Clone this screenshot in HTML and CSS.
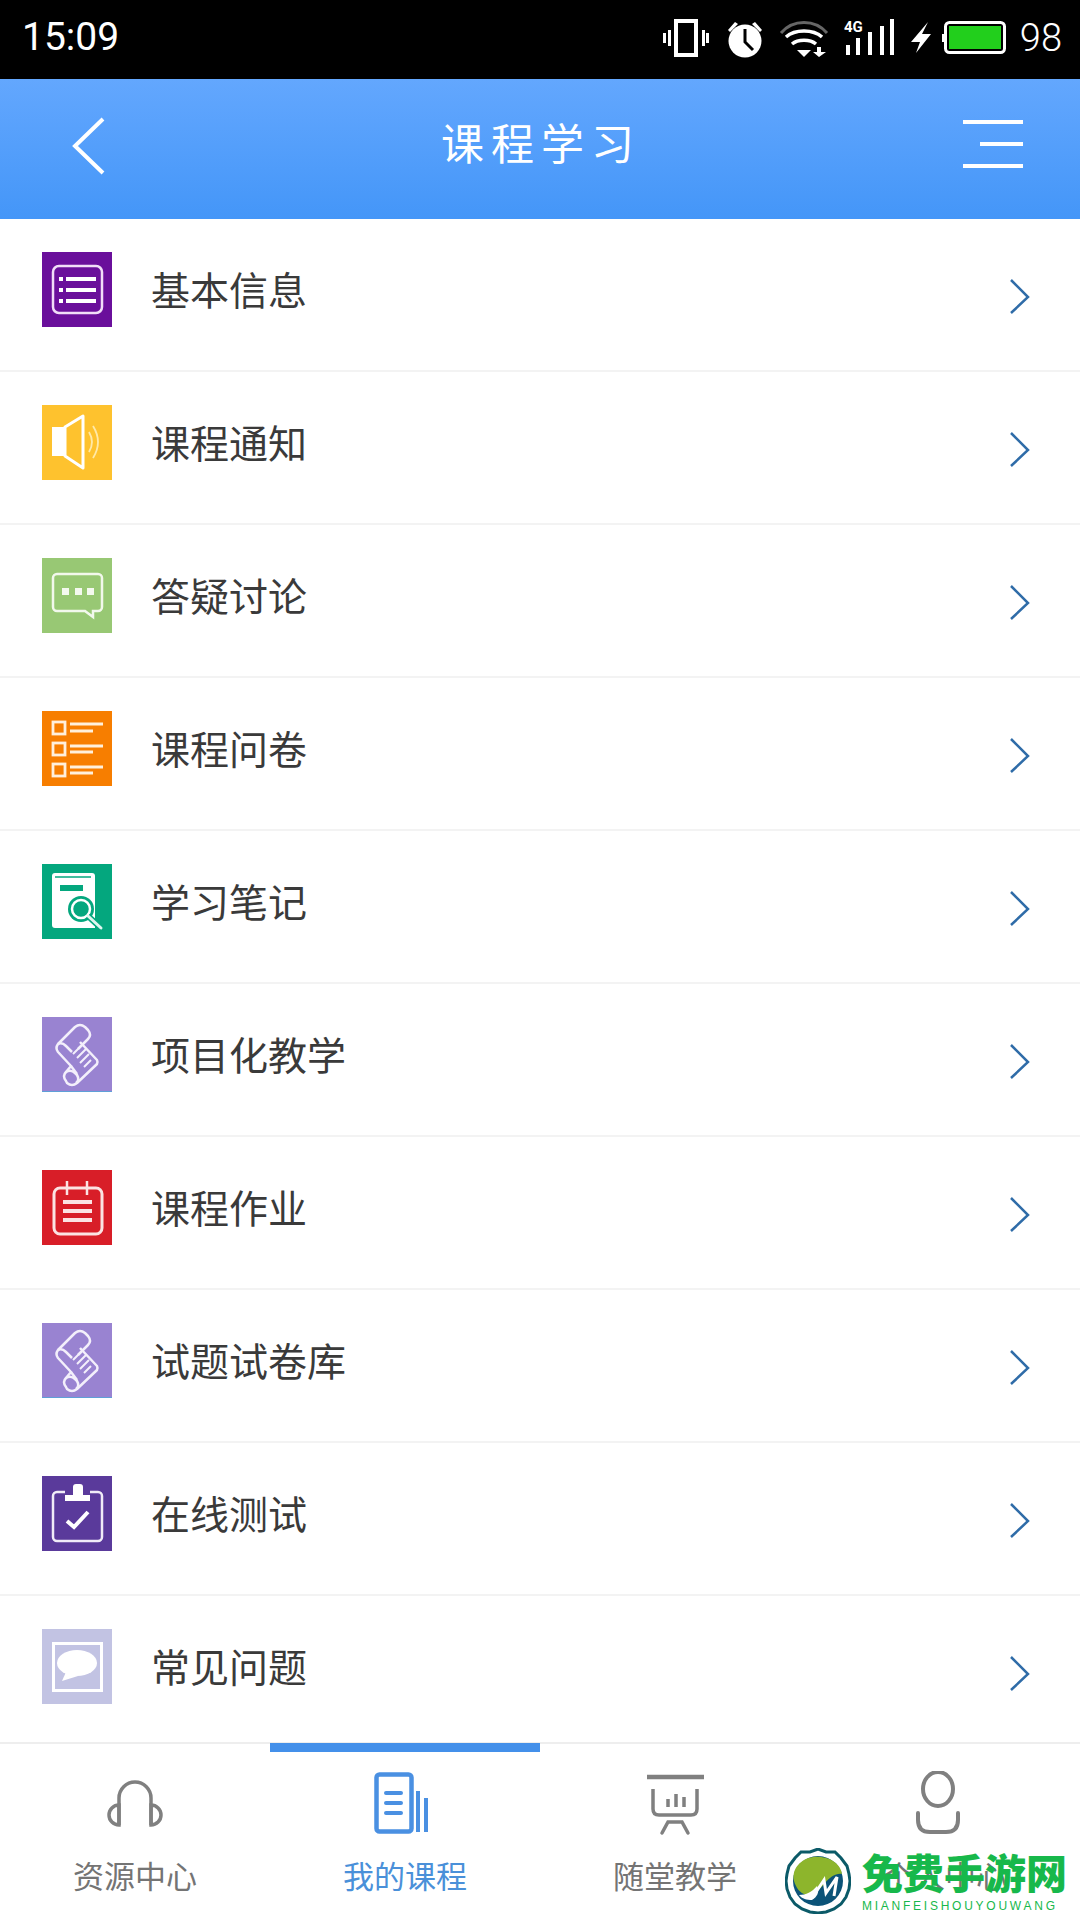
FILE: index.html
```html
<!DOCTYPE html>
<html lang="zh-CN">
<head>
<meta charset="utf-8">
<title>课程学习</title>
<link rel="stylesheet" href="styles.css">
</head>
<body>
<div class="app">
  <div class="status">
    <span class="time">15:09</span>
    <svg class="status-icons" viewBox="664 0 343 79" width="343" height="79">
      <g fill="#fff">
        <path fill-rule="evenodd" d="M675 19h24v38h-24zM679 23v30h16V23z"/>
        <rect x="664" y="33" width="3" height="10"/><rect x="669" y="30" width="3" height="16"/>
        <rect x="703" y="30" width="3" height="16"/><rect x="707" y="33" width="3" height="10"/>
        <circle cx="746" cy="41" r="16.500"/>
        <path d="M729 30l7-8 3 2-8 8zM763 30l-7-8-3 2 8 8z"/>
        <path d="M782 33c12-14 34-14 46 0" fill="none" stroke="#666" stroke-width="3"/>
        <path d="M787 37c9-8 27-8 36 0M793 44c6-5 18-5 24 0" fill="none" stroke="#fff" stroke-width="3.500"/>
        <path d="M798 50h14l-7 7z"/>
        <path d="M818 47h4v5h5l-7 5-6-5h4z"/>
        <text class="net" x="845" y="32">4G</text>
        <rect x="847" y="45" width="4" height="10"/><rect x="857" y="38" width="4" height="17"/><rect x="869" y="32" width="4" height="23"/><rect x="881" y="26" width="4" height="29"/><rect x="891" y="19" width="4" height="36"/>
        <path d="M929 22l-17 20h9l-4 11 15-19h-9z"/>
        <rect x="943" y="34" width="3" height="8"/>
      </g>
      <path d="M746 29v13l8 8" fill="none" stroke="#000" stroke-width="3"/>
      <rect x="946.500" y="22.500" width="59" height="30" rx="4" fill="#000" stroke="#fff" stroke-width="3"/>
      <rect x="950" y="26" width="52" height="23" fill="#22cf1c"/>
    </svg>
    <span class="battery">98</span>
  </div>

  <header class="bar">
    <svg class="back" viewBox="0 0 40 60" width="40" height="60"><path d="M33 4L5 31l28 27" fill="none" stroke="#fff" stroke-width="4"/></svg>
    <h1 class="title">课程学习</h1>
    <svg class="menu" viewBox="0 0 60 52" width="60" height="52"><path d="M0 4h60M17 26h43M0 48h60" stroke="#fff" stroke-width="4"/></svg>
  </header>

  <main class="list">
    <div class="row">
      <svg class="tile tile-info" viewBox="0 0 70 75"><rect x="11" y="14" width="49" height="47" rx="6" fill="none" stroke="#f1ddf8" stroke-width="2.500"/><path d="M17 27h4M17 38h4M17 49h4M24 27h30M24 38h30M24 49h30" stroke="#fff" stroke-width="4"/></svg>
      <span class="label">基本信息</span>
      <svg class="chev" viewBox="0 0 24 75"><path d="M1 28l17 17L1 61" fill="none" stroke="#2f6ca8" stroke-width="2.500"/></svg>
    </div>
    <div class="row">
      <svg class="tile tile-notice" viewBox="0 0 70 75"><path d="M10 22h13v29H10z" fill="#fff"/><path d="M23 22l18-11v52L23 51z" fill="none" stroke="#fff" stroke-width="3" stroke-linejoin="round"/><path d="M47 27q6 10 0 20M51 21q10 16 0 32" fill="none" stroke="#ffe9a8" stroke-width="1.800"/></svg>
      <span class="label">课程通知</span>
      <svg class="chev" viewBox="0 0 24 75"><path d="M1 28l17 17L1 61" fill="none" stroke="#2f6ca8" stroke-width="2.500"/></svg>
    </div>
    <div class="row">
      <svg class="tile tile-talk" viewBox="0 0 70 75"><path d="M15 16h41a4 4 0 0 1 4 4v29a4 4 0 0 1-4 4h-5v6l-8-6H15a4 4 0 0 1-4-4V20a4 4 0 0 1 4-4z" fill="none" stroke="#f2f8ec" stroke-width="2.500"/><path d="M20 30h7v7h-7zM33 30h7v7h-7zM45 30h7v7h-7z" fill="#f4f9ef"/></svg>
      <span class="label">答疑讨论</span>
      <svg class="chev" viewBox="0 0 24 75"><path d="M1 28l17 17L1 61" fill="none" stroke="#2f6ca8" stroke-width="2.500"/></svg>
    </div>
    <div class="row">
      <svg class="tile tile-survey" viewBox="0 0 70 75"><g fill="none" stroke="#fff0dc" stroke-width="2.800"><rect x="11" y="11" width="12" height="12"/><rect x="11" y="32" width="12" height="12"/><rect x="11" y="53" width="12" height="12"/><path d="M28 13h33M28 20h23M28 35h33M28 41h23M28 56h33M28 62h23"/></g></svg>
      <span class="label">课程问卷</span>
      <svg class="chev" viewBox="0 0 24 75"><path d="M1 28l17 17L1 61" fill="none" stroke="#2f6ca8" stroke-width="2.500"/></svg>
    </div>
    <div class="row">
      <svg class="tile tile-notes" viewBox="0 0 70 75"><path d="M13 9h37a3 3 0 0 1 3 3v52H13a3 3 0 0 1-3-3V12a3 3 0 0 1 3-3z" fill="#fff"/><path d="M13 13h36" stroke="#04a77e" stroke-width="1.500"/><rect x="18" y="21" width="23" height="6" fill="#04a77e"/><circle cx="39" cy="45" r="13" fill="#04a77e"/><circle cx="39" cy="45" r="9" fill="#04a77e" stroke="#fff" stroke-width="2.500"/><path d="M46 52l13 12" stroke="#04a77e" stroke-width="6"/><path d="M46 52l13 12" stroke="#dff6ef" stroke-width="3" stroke-linecap="round"/></svg>
      <span class="label">学习笔记</span>
      <svg class="chev" viewBox="0 0 24 75"><path d="M1 28l17 17L1 61" fill="none" stroke="#2f6ca8" stroke-width="2.500"/></svg>
    </div>
    <div class="row">
      <svg class="tile tile-scroll" viewBox="0 0 70 75"><rect y="74" width="70" height="1" fill="#5f9fd8"/><g fill="none" stroke="#f3effb" stroke-width="2.500" stroke-linejoin="round"><path d="M16 27L33 10q5-4 10 0l3 3q4 5 0 9L36 32"/><path d="M38 25l17 18q1 2 0 4L35 66q-5 4-10 0l-1-2q-4-5 0-9l5-6-13-14q-3-4 0-8q4-2 8 2l6 6"/><path d="M24 55q5-3 9 1l2 2q3 5-1 8"/><path d="M29 49l6 8" /><path d="M31 37l8-8M35 41l9-9M38 46l9-9M42 50l7-7" stroke-width="2"/></g></svg>
      <span class="label">项目化教学</span>
      <svg class="chev" viewBox="0 0 24 75"><path d="M1 28l17 17L1 61" fill="none" stroke="#2f6ca8" stroke-width="2.500"/></svg>
    </div>
    <div class="row">
      <svg class="tile tile-work" viewBox="0 0 70 75"><rect x="12" y="18" width="48" height="46" rx="6" fill="none" stroke="#fbe3e3" stroke-width="3"/><path d="M25 11v14M45 11v14" stroke="#fbe3e3" stroke-width="2.500"/><path d="M21 32h29M21 41h29M21 50h29" stroke="#fbe3e3" stroke-width="4"/></svg>
      <span class="label">课程作业</span>
      <svg class="chev" viewBox="0 0 24 75"><path d="M1 28l17 17L1 61" fill="none" stroke="#2f6ca8" stroke-width="2.500"/></svg>
    </div>
    <div class="row">
      <svg class="tile tile-scroll" viewBox="0 0 70 75"><rect y="74" width="70" height="1" fill="#5f9fd8"/><g fill="none" stroke="#f3effb" stroke-width="2.500" stroke-linejoin="round"><path d="M16 27L33 10q5-4 10 0l3 3q4 5 0 9L36 32"/><path d="M38 25l17 18q1 2 0 4L35 66q-5 4-10 0l-1-2q-4-5 0-9l5-6-13-14q-3-4 0-8q4-2 8 2l6 6"/><path d="M24 55q5-3 9 1l2 2q3 5-1 8"/><path d="M29 49l6 8"/><path d="M31 37l8-8M35 41l9-9M38 46l9-9M42 50l7-7" stroke-width="2"/></g></svg>
      <span class="label">试题试卷库</span>
      <svg class="chev" viewBox="0 0 24 75"><path d="M1 28l17 17L1 61" fill="none" stroke="#2f6ca8" stroke-width="2.500"/></svg>
    </div>
    <div class="row">
      <svg class="tile tile-test" viewBox="0 0 70 75"><path d="M23 16H15a4 4 0 0 0-4 4v41a4 4 0 0 0 4 4h41a4 4 0 0 0 4-4V20a4 4 0 0 0-4-4h-8" fill="none" stroke="#f0ecf8" stroke-width="2.500"/><path d="M31 11a3 3 0 0 1 3-3h4a3 3 0 0 1 3 3v8h7v6H23v-6h8z" fill="#fff"/><path d="M25 45l7 6 14-15" fill="none" stroke="#fff" stroke-width="4"/></svg>
      <span class="label">在线测试</span>
      <svg class="chev" viewBox="0 0 24 75"><path d="M1 28l17 17L1 61" fill="none" stroke="#2f6ca8" stroke-width="2.500"/></svg>
    </div>
    <div class="row">
      <svg class="tile tile-faq" viewBox="0 0 70 75"><rect x="11.500" y="14.500" width="48" height="47" fill="none" stroke="#fff" stroke-width="3"/><ellipse cx="35" cy="34" rx="20" ry="13" fill="#fff"/><path d="M24 43l-4 9 16-5z" fill="#fff"/></svg>
      <span class="label">常见问题</span>
      <svg class="chev" viewBox="0 0 24 75"><path d="M1 28l17 17L1 61" fill="none" stroke="#2f6ca8" stroke-width="2.500"/></svg>
    </div>
  </main>

  <nav class="tabs">
    <div class="tab">
      <svg class="tab-icon" viewBox="0 0 70 70"><g fill="none" stroke="#808080" stroke-width="3.500"><path d="M19 54V27a15.500 15.500 0 0 1 32 0v27"/><path d="M19 34a10 10 0 0 0 0 20zM51 34a10 10 0 0 1 0 20z"/></g></svg>
      <span class="tab-label">资源中心</span>
    </div>
    <div class="tab tab-on">
      <svg class="tab-icon" viewBox="0 0 70 70"><g fill="none" stroke="#4a90e2"><rect x="6.500" y="3.500" width="35" height="57" rx="3" stroke-width="4.500"/><path d="M16 22h15M16 32h15M16 42h15" stroke-width="4" stroke-linecap="round"/><path d="M48 20v41" stroke-width="4"/><path d="M56 27v34" stroke-width="4"/></g></svg>
      <span class="tab-label">我的课程</span>
    </div>
    <div class="tab">
      <svg class="tab-icon" viewBox="0 0 70 70"><g fill="none" stroke="#808080" stroke-width="3.500"><path d="M7 6h57" stroke-width="4.500"/><path d="M13 18v20q0 6 6 6h32q6 0 6-6V18"/><path d="M28 28v8M36 23v13M44 26v10" stroke-width="3.500"/><path d="M22 62l6-11h14l6 11" stroke-linecap="round"/></g></svg>
      <span class="tab-label">随堂教学</span>
    </div>
    <div class="tab">
      <svg class="tab-icon" viewBox="0 0 70 70"><g fill="none" stroke="#808080" stroke-width="4"><ellipse cx="28" cy="18" rx="15" ry="17"/><path d="M8 42v7q0 12 12 12h16q12 0 12-12v-7" stroke-linecap="round"/></g></svg>
      <span class="tab-label">个人中心</span>
    </div>
  </nav>

  <aside class="mark">
    <svg class="mark-logo" viewBox="0 0 66 66" width="66" height="66">
      <path d="M33 1l8 3 9 0 6 6 6 8 2 8 1 7-1 8-3 8-5 7-7 5-8 3-8 1-8-1-8-3-7-5-5-7-3-8-1-8 1-7 2-8 6-8 6-6 9 0z" fill="#fff" stroke="#0b5a68" stroke-width="3"/>
      <circle cx="33" cy="33" r="25" fill="#0b5378"/>
      <path d="M9 33C6 18 20 7 36 9c11 1 20 8 21 17-6-1-12 3-17 9-6 8-14 13-19 12-6-2-10-7-12-14z" fill="#8db52c"/>
      <path d="M14 47c7 0 13-3 18-9 3 6 0 11-5 14-5 0-10-1-13-5z" fill="#fff"/>
      <path d="M27 50l12-18 2 13 11-16-3 19" fill="none" stroke="#fff" stroke-width="3"/>
    </svg>
    <div class="mark-text">
      <span class="mark-cn">免费手游网</span>
      <span class="mark-en">MIANFEISHOUYOUWANG</span>
    </div>
  </aside>
</div>
</body>
</html>
```
FILE: styles.css
```css
* { box-sizing: border-box; margin: 0; padding: 0; }
html, body { width: 1080px; height: 1920px; overflow: hidden; background: #fff; }
body { font-family: "Noto Sans CJK SC", "Noto Sans", sans-serif; }

.app { position: relative; width: 1080px; height: 1920px; display: flex; flex-direction: column; }

.status { height: 79px; flex: none; background: #000; color: #fff; display: flex; align-items: center; padding: 0 18px 0 22px; }
.time { font: 400 39px/1 Roboto, sans-serif; margin-right: auto; position: relative; top: -2px; }
.status-icons { display: block; flex: none; }
.net { font: 700 15px/1 Roboto, sans-serif; }
.battery { font: 300 38px/1 Roboto, sans-serif; margin-left: 14px; position: relative; top: -2px; }

.bar { height: 140px; flex: none; display: flex; align-items: center; padding: 0 57px 0 70px; background: linear-gradient(#63a7fe, #4496f8); color: #fff; }
.back, .menu { flex: none; display: block; }
.back { position: relative; top: -4px; }
.menu { position: relative; top: -5px; }
.title { flex: 1; text-align: center; font-size: 43px; font-weight: 400; letter-spacing: 7px; line-height: 60px; padding-left: 9px; position: relative; top: -8px; }

.list { flex: 1; min-height: 0; overflow: hidden; background: #fff; }
.row { height: 153px; display: flex; align-items: flex-start; padding: 33px 46px 0 42px; border-bottom: 2px solid #f3f3f3; }
.tile { width: 70px; height: 75px; flex: none; display: block; }
.label { margin-left: 39px; flex: 1; font-size: 39px; line-height: 72px; color: #3a3a3a; }
.chev { width: 24px; height: 75px; flex: none; display: block; }

.tile-info { background: #6a0f9b; }
.tile-notice { background: #fec22e; }
.tile-talk { background: #98c874; }
.tile-survey { background: #f77e00; }
.tile-notes { background: #04a77e; }
.tile-scroll { background: #9983d1; }
.tile-work { background: #d81e28; }
.tile-test { background: #5a3a9b; }
.tile-faq { background: #c2c3e3; }

.tabs { height: 178px; flex: none; display: grid; grid-template-columns: repeat(4, 270px); border-top: 2px solid #eee; background: #fff; }
.tab { display: flex; flex-direction: column; align-items: center; padding-top: 19px; border-top: 9px solid transparent; margin-top: -1px; }
.tab-on { border-top-color: #4490ea; }
.tab-icon { width: 70px; height: 70px; display: block; flex: none; }
.tab-label { margin-top: 12px; font-size: 31px; line-height: 44px; color: #747474; }
.tab-on .tab-label { color: #4a90d9; }

.mark { position: absolute; left: 785px; top: 1848px; display: flex; gap: 11px; }
.mark-logo { display: block; flex: none; }
.mark-text { display: flex; flex-direction: column; width: 210px; }
.mark-cn { font-size: 41px; font-weight: 900; line-height: 46px; color: #17b84b; white-space: nowrap; }
.mark-en { font: 400 12px/14px "Liberation Sans", sans-serif; letter-spacing: 2.750px; color: #17b84b; margin-top: 5px; white-space: nowrap; }
```
